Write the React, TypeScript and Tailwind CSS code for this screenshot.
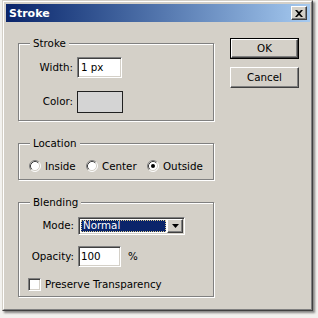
import React from 'react';

// Win2000 style bevels
const sunken =
  'border border-t-[#808080] border-l-[#808080] border-r-white border-b-white shadow-[inset_1px_1px_0_#404040,inset_-1px_-1px_0_#d4d0c8]';
const raised =
  'border border-t-white border-l-white border-r-[#404040] border-b-[#404040] shadow-[inset_-1px_-1px_0_#808080,inset_1px_1px_0_#d4d0c8]';

function Group({ title, className, children }: { title: string; className: string; children: React.ReactNode }) {
  return (
    <div className={`relative w-[196px] border border-[#808080] shadow-[inset_1px_1px_0_#fff,1px_1px_0_#fff] ${className}`}>
      <span className="absolute top-[-8px] left-[11px] bg-[#d4d0c8] px-[3px] leading-[14px]">{title}</span>
      {children}
    </div>
  );
}

function Radio({ checked }: { checked?: boolean }) {
  return (
    <svg width="12" height="12" viewBox="0 0 12 12" className="shrink-0">
      <circle cx="6" cy="6" r="5" fill="#fff" />
      <path d="M2.11 9.89 A5.5 5.5 0 0 1 9.89 2.11" stroke="#808080" fill="none" />
      <path d="M9.89 2.11 A5.5 5.5 0 0 1 2.11 9.89" stroke="#fff" fill="none" />
      <path d="M2.82 9.18 A4.5 4.5 0 0 1 9.18 2.82" stroke="#404040" fill="none" />
      <path d="M9.18 2.82 A4.5 4.5 0 0 1 2.82 9.18" stroke="#d4d0c8" fill="none" />
      {checked && <circle cx="6" cy="6" r="2" fill="#000" />}
    </svg>
  );
}

export default function App() {
  return (
    <div className="w-[318px] h-[318px] bg-[#f2f1ee] font-['DejaVu_Sans',sans-serif] text-[10.3px] text-black">
      {/* dialog window */}
      <div className="ml-[2px] w-[311px] h-[311px] bg-[#d4d0c8] border border-t-[#d4d0c8] border-l-[#d4d0c8] border-r-[#404040] border-b-[#404040] shadow-[2px_2px_2px_rgba(0,0,0,0.45)]">
        <div className="h-full border border-t-white border-l-white border-r-[#808080] border-b-[#808080] pt-[2px] pl-[2px] pr-[1px]">
          {/* title bar */}
          <div className="flex items-center justify-between h-[18px] bg-linear-to-r from-[#0a246a] to-[#a6caf0]">
            <span className="pl-[3px] text-[11px] font-bold text-white leading-none">Stroke</span>
            <button className={`mr-[3px] w-[16px] h-[14px] bg-[#d4d0c8] flex items-center justify-center ${raised}`}>
              <svg width="8" height="7" viewBox="0 0 8 7">
                <path d="M0 0h2l2 2 2-2h2L5 3.5 8 7H6L4 5 2 7H0l3-3.5z" fill="#000" />
              </svg>
            </button>
          </div>

          {/* body */}
          <div className="flex items-start pl-[12px]">
            <div className="mt-[21px] flex flex-col">
              <Group title="Stroke" className="h-[78px] pt-[13px]">
                <div className="flex items-center gap-[4px]">
                  <span className="w-[54px] text-right">Width:</span>
                  <div className={`w-[45px] h-[21px] bg-white flex items-center pl-[3px] ${sunken}`}>1 px</div>
                </div>
                <div className="mt-[13px] flex items-center gap-[4px]">
                  <span className="w-[54px] text-right">Color:</span>
                  <div className="w-[46px] h-[22px] bg-[#d4d4d4] border border-[#202020]" />
                </div>
              </Group>

              <Group title="Location" className="mt-[22px] h-[37px] pt-[16px] pl-[10px]">
                <div className="flex items-center">
                  <div className="w-[57px] flex items-center gap-[4px]">
                    <Radio />
                    <span className="leading-[12px]">Inside</span>
                  </div>
                  <div className="w-[61px] flex items-center gap-[4px]">
                    <Radio />
                    <span className="leading-[12px]">Center</span>
                  </div>
                  <div className="flex items-center gap-[4px]">
                    <Radio checked />
                    <span className="leading-[12px]">Outside</span>
                  </div>
                </div>
              </Group>

              <Group title="Blending" className="mt-[22px] h-[95px] pt-[14px]">
                <div className="flex items-center gap-[4px]">
                  <span className="w-[55px] text-right">Mode:</span>
                  <div className={`w-[107px] h-[18px] bg-white flex items-stretch p-[1px] ${sunken}`}>
                    <div className="flex-1 m-[1px] bg-[#0a246a] text-white flex items-center pl-[2px] outline outline-dotted outline-[#d8c890] -outline-offset-1">
                      Normal
                    </div>
                    <div className={`w-[16px] bg-[#d4d0c8] flex items-center justify-center ${raised}`}>
                      <svg width="7" height="4" viewBox="0 0 7 4">
                        <path d="M0 0h7L3.5 4z" fill="#000" />
                      </svg>
                    </div>
                  </div>
                </div>
                <div className="mt-[11px] flex items-center gap-[4px]">
                  <span className="w-[55px] text-right">Opacity:</span>
                  <div className={`w-[43px] h-[21px] bg-white flex items-center pl-[2px] ${sunken}`}>100</div>
                  <span className="ml-[3px]">%</span>
                </div>
                <div className="mt-[10px] pl-[9px] flex items-center gap-[4px]">
                  <div className={`w-[13px] h-[13px] bg-white ${sunken}`} />
                  <span>Preserve Transparency</span>
                </div>
              </Group>
            </div>

            {/* buttons */}
            <div className="ml-[16px] mt-[16px] flex flex-col gap-[8px]">
              <div className="w-[69px] h-[21px] border border-black">
                <button className={`w-full h-full bg-[#d4d0c8] flex items-center justify-center ${raised}`}>OK</button>
              </div>
              <button className={`w-[69px] h-[21px] bg-[#d4d0c8] flex items-center justify-center ${raised}`}>Cancel</button>
            </div>
          </div>
        </div>
      </div>
    </div>
  );
}
